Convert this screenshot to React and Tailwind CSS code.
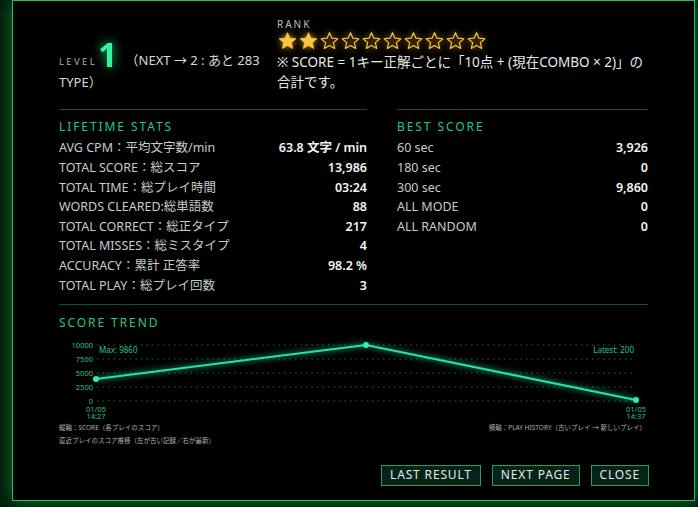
import React from "react";

const lifetime = [
  ["AVG CPM：平均文字数/min", "63.8 文字 / min"],
  ["TOTAL SCORE：総スコア", "13,986"],
  ["TOTAL TIME：総プレイ時間", "03:24"],
  ["WORDS CLEARED:総単語数", "88"],
  ["TOTAL CORRECT：総正タイプ", "217"],
  ["TOTAL MISSES：総ミスタイプ", "4"],
  ["ACCURACY：累計 正答率", "98.2 %"],
  ["TOTAL PLAY：総プレイ回数", "3"],
];

const best = [
  ["60 sec", "3,926"],
  ["180 sec", "0"],
  ["300 sec", "9,860"],
  ["ALL MODE", "0"],
  ["ALL RANDOM", "0"],
];

const font = "font-['Noto_Sans','Noto_Sans_CJK_JP',sans-serif]";

const StatRow = ({ label, value }) => (
  <div className="flex h-[19.6px] items-center justify-between text-[12.5px]">
    <span className="text-[#c6cdc8]">{label}</span>
    <span className="font-semibold text-[#f2f4f2]">{value}</span>
  </div>
);

const Star = ({ filled }) => (
  <svg width="21" height="20" viewBox="0 0 24 24" className="drop-shadow-[0_0_3px_#d19a22]">
    <polygon
      points="12,2 14.9,8.6 22,9.3 16.6,14 18.2,21 12,17.3 5.8,21 7.4,14 2,9.3 9.1,8.6"
      fill={filled ? "#f7c548" : "none"}
      stroke="#f7c548"
      strokeWidth={filled ? 1 : 1.4}
      strokeLinejoin="round"
    />
  </svg>
);

const Trend = () => {
  const grid = [7, 21, 35, 49, 63];
  const labels = ["10000", "7500", "5000", "2500", "0"];
  return (
    <svg width="589" height="82" className="block">
      {grid.map((y, i) => (
        <g key={y}>
          <line x1="38" x2="577" y1={y} y2={y} stroke="#1e6a4a" strokeWidth="1" strokeDasharray="1.5 4" />
          <text x="34" y={y + 2.5} textAnchor="end" fontSize="7.5" fill="#26c488" fontFamily="Noto Sans">
            {labels[i]}
          </text>
        </g>
      ))}
      <text x="40" y="15" fontSize="8" fill="#26c488" fontFamily="Noto Sans">Max: 9860</text>
      <text x="575" y="15" textAnchor="end" fontSize="8" fill="#26c488" fontFamily="Noto Sans">Latest: 200</text>
      <polyline
        points="37,41 307,7 577,62"
        fill="none"
        stroke="#22e6a2"
        strokeWidth="2"
        className="drop-shadow-[0_0_3px_#22e6a2]"
      />
      <circle cx="37" cy="41" r="3" fill="#2ff0ad" />
      <circle cx="307" cy="7" r="3" fill="#2ff0ad" />
      <circle cx="577" cy="62" r="3" fill="#2ff0ad" />
      <text x="37" y="74" textAnchor="middle" fontSize="7.5" fill="#26c488" fontFamily="Noto Sans">01/05</text>
      <text x="37" y="81" textAnchor="middle" fontSize="7.5" fill="#26c488" fontFamily="Noto Sans">14:27</text>
      <text x="577" y="74" textAnchor="middle" fontSize="7.5" fill="#26c488" fontFamily="Noto Sans">01/05</text>
      <text x="577" y="81" textAnchor="middle" fontSize="7.5" fill="#26c488" fontFamily="Noto Sans">14:37</text>
    </svg>
  );
};

const Btn = ({ children }) => (
  <button className="h-[21px] border border-[#2a9a58] bg-[#04241a] px-[8px] text-[12px] tracking-[0.07em] text-[#e4ebe6]">
    {children}
  </button>
);

export default function App() {
  return (
    <div className={`h-[507px] w-[698px] overflow-hidden bg-[#03180b] ${font}`}>
      <div className="ml-[12px] h-[501px] w-[683px] border border-[#2bbf55] bg-black px-[46px] pt-[17px] shadow-[0_0_18px_#0c7a33]">
        {/* header */}
        <div className="flex items-end">
          <p className="w-[218px] shrink-0 text-[13px] leading-[20px] text-[#d6dcd8]">
            <span className="text-[9.5px] tracking-[0.25em] text-[#a9b2ad]">LEVEL</span>
            <span className="ml-[1px] mr-[2px] align-[-2px] text-[34px] font-bold leading-none text-[#34f59b] drop-shadow-[0_0_6px_#1ed584]">1</span>
            <span className="ml-[6px]">（NEXT → 2 : あと 283 TYPE）</span>
          </p>
          <div className="w-[370px] shrink-0">
            <div className="text-[10px] leading-[12px] tracking-[0.2em] text-[#b8c0bb]">RANK</div>
            <div className="flex h-[22px] items-center">
              {Array.from({ length: 10 }).map((_, i) => (
                <Star key={i} filled={i < 2} />
              ))}
            </div>
            <p className="text-[13.5px] leading-[20px] text-[#e6ebe8]">
              ※ SCORE = 1キー正解ごとに「10点 + (現在COMBO × 2)」の合計です。
            </p>
          </div>
        </div>

        {/* stats */}
        <div className="mt-[17px] flex gap-[30px]">
          <div className="w-[308px]">
            <div className="h-px bg-[#14502c]" />
            <h3 className="mt-[9px] text-[12px] leading-[16px] tracking-[0.16em] text-[#22c988]">LIFETIME STATS</h3>
            <div className="mt-[4px]">
              {lifetime.map(([l, v]) => (
                <StatRow key={l} label={l} value={v} />
              ))}
            </div>
          </div>
          <div className="w-[251px]">
            <div className="h-px bg-[#14502c]" />
            <h3 className="mt-[9px] text-[12px] leading-[16px] tracking-[0.16em] text-[#22c988]">BEST SCORE</h3>
            <div className="mt-[4px]">
              {best.map(([l, v]) => (
                <StatRow key={l} label={l} value={v} />
              ))}
            </div>
          </div>
        </div>

        {/* trend */}
        <div className="mt-[8px] h-px w-[589px] bg-[#14502c]" />
        <h3 className="mt-[10px] text-[12px] leading-[16px] tracking-[0.16em] text-[#22c988]">SCORE TREND</h3>
        <div className="mt-[7px]">
          <Trend />
        </div>
        <div className="mt-[1px] flex w-[587px] justify-between text-[6.5px] leading-[13px] text-[#aab3ae]">
          <div>
            <div>縦軸：SCORE（各プレイのスコア）</div>
            <div>直近プレイのスコア推移（左が古い記録／右が最新）</div>
          </div>
          <div>横軸：PLAY HISTORY（古いプレイ → 新しいプレイ）</div>
        </div>

        <div className="mt-[18px] flex w-[590px] justify-end gap-[11px]">
          <Btn>LAST RESULT</Btn>
          <Btn>NEXT PAGE</Btn>
          <Btn>CLOSE</Btn>
        </div>
      </div>
    </div>
  );
}
